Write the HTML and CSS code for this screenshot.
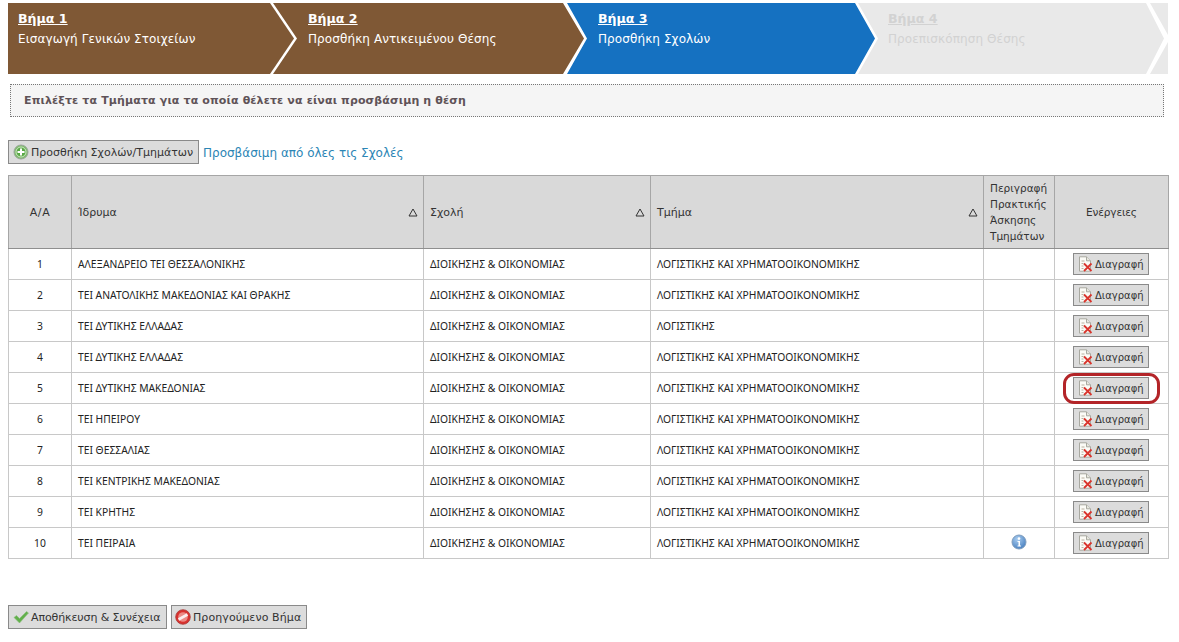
FILE: index.html
```html
<!DOCTYPE html>
<html lang="el">
<head>
<meta charset="utf-8">
<title>Προσθήκη Σχολών</title>
<link rel="stylesheet" href="styles.css">
</head>
<body>
<svg class="defs" width="0" height="0" aria-hidden="true">
  <defs>
    <symbol id="del" viewBox="0 0 16 16">
      <path d="M2.500 .8h7l4 4v10.400h-11z" fill="#fbfbf6" stroke="#a8a8a0" stroke-width="1"/>
      <path d="M9.500 .8v4h4" fill="#e8e8de" stroke="#a8a8a0" stroke-width="1"/>
      <path d="M4.500 5h3M4.500 7.500h2M4.500 10h2M4.500 12.500h2" stroke="#b9b0a0" stroke-width="1"/>
      <path d="M7 7.500l7.500 7.500M14.500 7.500L7 15" stroke="#d9342c" stroke-width="1.800"/>
    </symbol>
    <symbol id="tri" viewBox="0 0 10 9">
      <path d="M5 1l4 7H1z" fill="none" stroke="#333" stroke-width="1"/>
    </symbol>
  </defs>
</svg>

<nav class="wizard">
  <div class="step step-1 done"><a class="step-title">Βήμα 1</a><span class="step-desc">Εισαγωγή Γενικών Στοιχείων</span></div>
  <div class="step step-2 done"><a class="step-title">Βήμα 2</a><span class="step-desc">Προσθήκη Αντικειμένου Θέσης</span></div>
  <div class="step step-3 current"><a class="step-title">Βήμα 3</a><span class="step-desc">Προσθήκη Σχολών</span></div>
  <div class="step step-4 todo"><a class="step-title">Βήμα 4</a><span class="step-desc">Προεπισκόπηση Θέσης</span></div>
  <div class="step step-5 todo"></div>
</nav>

<div class="notice">Επιλέξτε τα Τμήματα για τα οποία θέλετε να είναι προσβάσιμη η θέση</div>

<div class="toolbar">
  <button class="btn btn-add" type="button">
    <svg class="ico" viewBox="0 0 16 16"><circle cx="8" cy="8" r="7" fill="#7dbb6a" stroke="#9aa59a"/><circle cx="8" cy="8" r="5" fill="#59a845" stroke="#cfe8c6"/><path d="M8 4.500v7M4.500 8h7" stroke="#fff" stroke-width="2"/></svg>
    Προσθήκη Σχολών/Τμημάτων
  </button>
  <a class="link">Προσβάσιμη από όλες τις Σχολές</a>
</div>

<table class="grid">
  <colgroup>
    <col class="c-num"><col class="c-inst"><col class="c-school"><col class="c-dept"><col class="c-desc"><col class="c-act">
  </colgroup>
  <thead>
    <tr>
      <th class="center th-num">Α/Α</th>
      <th><div class="sort">Ίδρυμα<svg class="tri"><use href="#tri"/></svg></div></th>
      <th><div class="sort">Σχολή<svg class="tri"><use href="#tri"/></svg></div></th>
      <th><div class="sort">Τμήμα<svg class="tri"><use href="#tri"/></svg></div></th>
      <th class="th-desc">Περιγραφή Πρακτικής Άσκησης Τμημάτων</th>
      <th class="center th-act">Ενέργειες</th>
    </tr>
  </thead>
  <tbody>
    <tr><td class="center">1</td><td>ΑΛΕΞΑΝΔΡΕΙΟ ΤΕΙ ΘΕΣΣΑΛΟΝΙΚΗΣ</td><td>ΔΙΟΙΚΗΣΗΣ &amp; ΟΙΚΟΝΟΜΙΑΣ</td><td>ΛΟΓΙΣΤΙΚΗΣ ΚΑΙ ΧΡΗΜΑΤΟΟΙΚΟΝΟΜΙΚΗΣ</td><td></td><td class="center"><button class="btn btn-del" type="button"><svg class="ico"><use href="#del"/></svg>Διαγραφή</button></td></tr>
    <tr><td class="center">2</td><td>ΤΕΙ ΑΝΑΤΟΛΙΚΗΣ ΜΑΚΕΔΟΝΙΑΣ ΚΑΙ ΘΡΑΚΗΣ</td><td>ΔΙΟΙΚΗΣΗΣ &amp; ΟΙΚΟΝΟΜΙΑΣ</td><td>ΛΟΓΙΣΤΙΚΗΣ ΚΑΙ ΧΡΗΜΑΤΟΟΙΚΟΝΟΜΙΚΗΣ</td><td></td><td class="center"><button class="btn btn-del" type="button"><svg class="ico"><use href="#del"/></svg>Διαγραφή</button></td></tr>
    <tr><td class="center">3</td><td>ΤΕΙ ΔΥΤΙΚΗΣ ΕΛΛΑΔΑΣ</td><td>ΔΙΟΙΚΗΣΗΣ &amp; ΟΙΚΟΝΟΜΙΑΣ</td><td>ΛΟΓΙΣΤΙΚΗΣ</td><td></td><td class="center"><button class="btn btn-del" type="button"><svg class="ico"><use href="#del"/></svg>Διαγραφή</button></td></tr>
    <tr><td class="center">4</td><td>ΤΕΙ ΔΥΤΙΚΗΣ ΕΛΛΑΔΑΣ</td><td>ΔΙΟΙΚΗΣΗΣ &amp; ΟΙΚΟΝΟΜΙΑΣ</td><td>ΛΟΓΙΣΤΙΚΗΣ ΚΑΙ ΧΡΗΜΑΤΟΟΙΚΟΝΟΜΙΚΗΣ</td><td></td><td class="center"><button class="btn btn-del" type="button"><svg class="ico"><use href="#del"/></svg>Διαγραφή</button></td></tr>
    <tr><td class="center">5</td><td>ΤΕΙ ΔΥΤΙΚΗΣ ΜΑΚΕΔΟΝΙΑΣ</td><td>ΔΙΟΙΚΗΣΗΣ &amp; ΟΙΚΟΝΟΜΙΑΣ</td><td>ΛΟΓΙΣΤΙΚΗΣ ΚΑΙ ΧΡΗΜΑΤΟΟΙΚΟΝΟΜΙΚΗΣ</td><td></td><td class="center marked"><button class="btn btn-del" type="button"><svg class="ico"><use href="#del"/></svg>Διαγραφή</button></td></tr>
    <tr><td class="center">6</td><td>ΤΕΙ ΗΠΕΙΡΟΥ</td><td>ΔΙΟΙΚΗΣΗΣ &amp; ΟΙΚΟΝΟΜΙΑΣ</td><td>ΛΟΓΙΣΤΙΚΗΣ ΚΑΙ ΧΡΗΜΑΤΟΟΙΚΟΝΟΜΙΚΗΣ</td><td></td><td class="center"><button class="btn btn-del" type="button"><svg class="ico"><use href="#del"/></svg>Διαγραφή</button></td></tr>
    <tr><td class="center">7</td><td>ΤΕΙ ΘΕΣΣΑΛΙΑΣ</td><td>ΔΙΟΙΚΗΣΗΣ &amp; ΟΙΚΟΝΟΜΙΑΣ</td><td>ΛΟΓΙΣΤΙΚΗΣ ΚΑΙ ΧΡΗΜΑΤΟΟΙΚΟΝΟΜΙΚΗΣ</td><td></td><td class="center"><button class="btn btn-del" type="button"><svg class="ico"><use href="#del"/></svg>Διαγραφή</button></td></tr>
    <tr><td class="center">8</td><td>ΤΕΙ ΚΕΝΤΡΙΚΗΣ ΜΑΚΕΔΟΝΙΑΣ</td><td>ΔΙΟΙΚΗΣΗΣ &amp; ΟΙΚΟΝΟΜΙΑΣ</td><td>ΛΟΓΙΣΤΙΚΗΣ ΚΑΙ ΧΡΗΜΑΤΟΟΙΚΟΝΟΜΙΚΗΣ</td><td></td><td class="center"><button class="btn btn-del" type="button"><svg class="ico"><use href="#del"/></svg>Διαγραφή</button></td></tr>
    <tr><td class="center">9</td><td>ΤΕΙ ΚΡΗΤΗΣ</td><td>ΔΙΟΙΚΗΣΗΣ &amp; ΟΙΚΟΝΟΜΙΑΣ</td><td>ΛΟΓΙΣΤΙΚΗΣ ΚΑΙ ΧΡΗΜΑΤΟΟΙΚΟΝΟΜΙΚΗΣ</td><td></td><td class="center"><button class="btn btn-del" type="button"><svg class="ico"><use href="#del"/></svg>Διαγραφή</button></td></tr>
    <tr><td class="center">10</td><td>ΤΕΙ ΠΕΙΡΑΙΑ</td><td>ΔΙΟΙΚΗΣΗΣ &amp; ΟΙΚΟΝΟΜΙΑΣ</td><td>ΛΟΓΙΣΤΙΚΗΣ ΚΑΙ ΧΡΗΜΑΤΟΟΙΚΟΝΟΜΙΚΗΣ</td><td class="center"><svg class="info" viewBox="0 0 16 16"><defs><radialGradient id="ig" cx=".4" cy=".3" r=".8"><stop offset="0" stop-color="#a9cdf0"/><stop offset="1" stop-color="#3f78bb"/></radialGradient></defs><circle cx="8" cy="8" r="7" fill="url(#ig)" stroke="#7f9dbd"/><circle cx="8" cy="4.600" r="1.300" fill="#fff"/><path d="M6.500 7h2.500v4.500h1v1H6.500v-1h1V8h-1z" fill="#fff"/></svg></td><td class="center"><button class="btn btn-del" type="button"><svg class="ico"><use href="#del"/></svg>Διαγραφή</button></td></tr>
  </tbody>
</table>

<div class="actions">
  <button class="btn btn-save" type="button">
    <svg class="ico ico-check" viewBox="0 0 16 16"><path d="M1 8.500l2.500-2 3 3L13.500 2.500l2 1.500-9 10z" fill="#62b04c" stroke="#8fbf80" stroke-width=".6"/></svg>
    Αποθήκευση &amp; Συνέχεια
  </button>
  <button class="btn btn-prev" type="button">
    <svg class="ico ico-no" viewBox="0 0 16 16"><circle cx="8" cy="8" r="7.300" fill="#d8322f" stroke="#a83a38" stroke-width=".8"/><circle cx="8" cy="8" r="4.800" fill="#ec8a85"/><path d="M3.500 10.500l9-5" stroke="#fbeeee" stroke-width="2.600"/></svg>
    Προηγούμενο Βήμα
  </button>
</div>
</body>
</html>
```
FILE: styles.css
```css
*, *::after { box-sizing: border-box; }
html, body { margin: 0; padding: 0; background: #fff; }
body {
  width: 1179px;
  height: 642px;
  overflow: hidden;
  padding: 3px 11px 0 8px;
  font-family: "DejaVu Sans", Verdana, sans-serif;
  font-size: 12px;
  color: #333;
}
.defs { position: absolute; }

.wizard { display: flex; height: 71px; }
.step {
  flex: none;
  height: 71px;
  padding-top: 8px;
  color: #fff;
  font-size: 12px;
}
.step-title {
  display: block;
  font-weight: bold;
  font-size: 12.600px;
  line-height: 16px;
  text-decoration: underline;
}
.step-desc { display: block; margin-top: 4px; line-height: 16px; letter-spacing: .1px; white-space: nowrap; }
.done { background: #7f5835; }
.current { background: #1571c1; }
.todo { background: #e9e9e9; color: #d2d2d2; }
.step-1 { width: 286px; padding-left: 10px; clip-path: polygon(0 0, 262px 0, 286px 35.5px, 262px 71px, 0 71px); }
.step-2 { width: 311px; margin-left: -21px; padding-left: 35px; clip-path: polygon(0 0, 290px 0, 311px 35.5px, 290px 71px, 0 71px, 24px 35.5px); }
.step-3 { width: 308px; margin-left: -17px; padding-left: 31px; clip-path: polygon(0 0, 288px 0, 308px 35.5px, 288px 71px, 0 71px, 20px 35.5px); }
.step-4 { width: 306px; margin-left: -17px; padding-left: 30px; clip-path: polygon(0 0, 288px 0, 306px 35.5px, 288px 71px, 0 71px, 20px 35.5px); }
.step-5 { width: 18px; margin-left: -14px; clip-path: polygon(0 0, 18px 0, 18px 32px, 0 0, 18px 39px, 18px 71px, 0 71px, 18px 39px); }

.notice {
  width: 1154px;
  height: 33px;
  margin: 10px 0 0 2px;
  padding-left: 13px;
  border: 1px dotted #777;
  background: #f5f5f5;
  color: #5f5358;
  font-size: 11px;
  font-weight: bold;
  letter-spacing: .14px;
  line-height: 32px;
}

.toolbar { display: flex; align-items: center; gap: 4px; height: 24px; margin-top: 23px; }
.btn {
  display: inline-flex;
  align-items: center;
  height: 24px;
  padding: 0 4px;
  border: 1px solid #8a8a8a;
  background: #dcdcdc;
  color: #333;
  font-family: inherit;
  font-size: 11px;
  white-space: nowrap;
}
.ico { flex: none; width: 16px; height: 16px; margin-right: 2px; }
.btn-add { width: 191px; }
.link { margin-top: 2px; color: #2b85b5; font-size: 12px; }

.grid {
  table-layout: fixed;
  width: 1160px;
  margin-top: 11px;
  border-collapse: collapse;
  border: 1px solid #8f8f8f;
  font-family: "Noto Sans", sans-serif;
}
.c-num { width: 63px; }
.c-inst { width: 352px; }
.c-school { width: 227px; }
.c-dept { width: 333px; }
.c-desc { width: 71px; }
.c-act { width: 114px; }
th {
  height: 73px;
  padding: 0 6px;
  background: #d9d9d9;
  border: 1px solid #a6a6a6;
  border-bottom-color: #8f8f8f;
  color: #333;
  font-family: "DejaVu Sans", sans-serif;
  font-size: 11px;
  font-weight: normal;
  text-align: left;
}
.th-num { letter-spacing: .6px; }
.th-act { font-size: 10.500px; letter-spacing: -.15px; }
.th-desc { padding: 0 0 0 6px; font-size: 10.500px; line-height: 16px; }
.sort { display: flex; align-items: center; justify-content: space-between; margin-right: -1px; }
.tri { flex: none; width: 10px; height: 9px; }
td {
  height: 31px;
  padding: 0 6px;
  border: 1px solid #c8c8c8;
  color: #222;
  font-size: 10.300px;
  white-space: nowrap;
}
.center { text-align: center; }
.marked { position: relative; }
.marked::after {
  content: "";
  position: absolute;
  left: 8px;
  top: 0;
  width: 97px;
  height: 31px;
  border: 3px solid #b32428;
  border-radius: 11px;
}
.btn-del {
  width: 76px;
  height: 22px;
  margin-right: 1px;
  padding: 0 0 0 3px;
  vertical-align: middle;
  font-family: "DejaVu Sans", sans-serif;
  font-size: 10px;
}
.btn-del .ico { margin-right: 2px; }
.info { width: 16px; height: 16px; vertical-align: middle; margin-bottom: 2px; }

.actions { display: flex; gap: 4px; margin-top: 46px; }
.btn-save { width: 159px; letter-spacing: -.1px; }
.btn-prev { width: 136px; padding-left: 3px; letter-spacing: .1px; }
.ico-no { margin-right: 2px; }
```
